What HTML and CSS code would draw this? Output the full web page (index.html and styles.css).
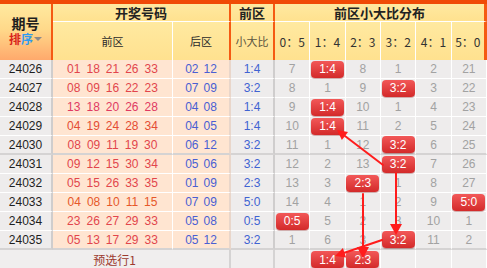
FILE: index.html
```html
<!DOCTYPE html>
<html lang="zh-CN">
<head>
<meta charset="utf-8">
<title>前区小大比分布</title>
<link rel="stylesheet" href="styles.css">
</head>
<body>
<div class="board">
  <div class="grid">
    <div class="cell h-no"><span class="t1">期号</span><span class="t2"><b class="red">排</b><b class="blue">序</b><i class="tri"></i></span></div>
    <div class="cell hd top ob span2">开奖号码</div>
    <div class="cell hd top ob">前区</div>
    <div class="cell hd top orr span6">前区小大比分布</div>

    <div class="cell hd sub wb">前区</div>
    <div class="cell hd sub ob">后区</div>
    <div class="cell hd sub ob ratio-h">小大比</div>
    <div class="cell hd dh wb">0：5</div>
    <div class="cell hd dh wb">1：4</div>
    <div class="cell hd dh wb">2：3</div>
    <div class="cell hd dh wb">3：2</div>
    <div class="cell hd dh wb">4：1</div>
    <div class="cell hd dh orr">5：0</div>

    <div class="row">
      <div class="cell no">24026</div>
      <div class="cell fr c-r"><span>01</span><span>18</span><span>21</span><span>26</span><span>33</span></div>
      <div class="cell bk"><span>02</span><span>12</span></div>
      <div class="cell rt">1:4</div>
      <div class="cell d">7</div><div class="cell d"><span class="b">1:4</span></div><div class="cell d">8</div><div class="cell d">1</div><div class="cell d">2</div><div class="cell d">21</div>
    </div>
    <div class="row">
      <div class="cell no">24027</div>
      <div class="cell fr c-r"><span>08</span><span>09</span><span>16</span><span>22</span><span>23</span></div>
      <div class="cell bk"><span>07</span><span>09</span></div>
      <div class="cell rt">3:2</div>
      <div class="cell d">8</div><div class="cell d">1</div><div class="cell d">9</div><div class="cell d"><span class="b">3:2</span></div><div class="cell d">3</div><div class="cell d">22</div>
    </div>
    <div class="row">
      <div class="cell no">24028</div>
      <div class="cell fr c-p"><span>13</span><span>18</span><span>20</span><span>26</span><span>28</span></div>
      <div class="cell bk"><span>04</span><span>08</span></div>
      <div class="cell rt">1:4</div>
      <div class="cell d">9</div><div class="cell d"><span class="b">1:4</span></div><div class="cell d">10</div><div class="cell d">1</div><div class="cell d">4</div><div class="cell d">23</div>
    </div>
    <div class="row">
      <div class="cell no">24029</div>
      <div class="cell fr c-o"><span>04</span><span>19</span><span>24</span><span>28</span><span>34</span></div>
      <div class="cell bk"><span>04</span><span>05</span></div>
      <div class="cell rt">1:4</div>
      <div class="cell d">10</div><div class="cell d"><span class="b">1:4</span></div><div class="cell d">11</div><div class="cell d">2</div><div class="cell d">5</div><div class="cell d">24</div>
    </div>
    <div class="row end">
      <div class="cell no">24030</div>
      <div class="cell fr c-r"><span>08</span><span>09</span><span>11</span><span>19</span><span>30</span></div>
      <div class="cell bk"><span>06</span><span>12</span></div>
      <div class="cell rt">3:2</div>
      <div class="cell d">11</div><div class="cell d">1</div><div class="cell d">12</div><div class="cell d"><span class="b">3:2</span></div><div class="cell d">6</div><div class="cell d">25</div>
    </div>
    <div class="row">
      <div class="cell no">24031</div>
      <div class="cell fr c-r"><span>09</span><span>12</span><span>15</span><span>30</span><span>34</span></div>
      <div class="cell bk"><span>05</span><span>06</span></div>
      <div class="cell rt">3:2</div>
      <div class="cell d">12</div><div class="cell d">2</div><div class="cell d">13</div><div class="cell d"><span class="b">3:2</span></div><div class="cell d">7</div><div class="cell d">26</div>
    </div>
    <div class="row">
      <div class="cell no">24032</div>
      <div class="cell fr c-r"><span>05</span><span>15</span><span>26</span><span>33</span><span>35</span></div>
      <div class="cell bk"><span>01</span><span>09</span></div>
      <div class="cell rt">2:3</div>
      <div class="cell d">13</div><div class="cell d">3</div><div class="cell d"><span class="b">2:3</span></div><div class="cell d">1</div><div class="cell d">8</div><div class="cell d">27</div>
    </div>
    <div class="row">
      <div class="cell no">24033</div>
      <div class="cell fr c-o2"><span>04</span><span>08</span><span>10</span><span>11</span><span>15</span></div>
      <div class="cell bk"><span>07</span><span>09</span></div>
      <div class="cell rt">5:0</div>
      <div class="cell d">14</div><div class="cell d">4</div><div class="cell d">1</div><div class="cell d">2</div><div class="cell d">9</div><div class="cell d"><span class="b">5:0</span></div>
    </div>
    <div class="row">
      <div class="cell no">24034</div>
      <div class="cell fr c-r"><span>23</span><span>26</span><span>27</span><span>29</span><span>33</span></div>
      <div class="cell bk"><span>05</span><span>08</span></div>
      <div class="cell rt">0:5</div>
      <div class="cell d"><span class="b">0:5</span></div><div class="cell d">5</div><div class="cell d">2</div><div class="cell d">3</div><div class="cell d">10</div><div class="cell d">1</div>
    </div>
    <div class="row end">
      <div class="cell no">24035</div>
      <div class="cell fr c-r"><span>05</span><span>13</span><span>17</span><span>29</span><span>33</span></div>
      <div class="cell bk"><span>05</span><span>12</span></div>
      <div class="cell rt">3:2</div>
      <div class="cell d">1</div><div class="cell d">6</div><div class="cell d">3</div><div class="cell d"><span class="b">3:2</span></div><div class="cell d">11</div><div class="cell d">2</div>
    </div>
    <div class="row foot">
      <div class="cell ft-label">预选行1</div>
      <div class="cell ft"></div>
      <div class="cell ft d"></div><div class="cell ft d"><span class="b">1:4</span></div><div class="cell ft d"><span class="b">2:3</span></div><div class="cell ft d"></div><div class="cell ft d"></div><div class="cell ft d"></div>
    </div>
  </div>

  <svg class="arrows" width="487" height="268" viewBox="0 0 487 268">
    <g stroke="#ff1c1c" stroke-width="2" fill="none" stroke-linecap="round">
      <line x1="383" y1="165" x2="345" y2="136"/>
      <line x1="396" y1="173" x2="396" y2="225"/>
      <line x1="382" y1="240" x2="344.5" y2="252.8"/>
      <line x1="363" y1="194" x2="363" y2="248"/>
    </g>
    <g fill="#ff1c1c">
      <polygon points="337,130 348,132.1 341.9,140"/>
      <polygon points="396,235 390,224 402,224"/>
      <polygon points="335,256 346.1,257.5 342.9,248.1"/>
      <polygon points="363,258 357,247 369,247"/>
    </g>
  </svg>
</div>
</body>
</html>
```

FILE: styles.css
```css
html, body {
  margin: 0;
  padding: 0;
  background: #fff;
  overflow: hidden;
}

body {
  font-family: "Liberation Sans", "Noto Sans CJK SC", sans-serif;
  font-size: 12px;
  color: #222;
}

.board {
  position: relative;
  width: 487px;
}

.grid {
  display: grid;
  grid-template-columns: 53px 120px 58px 44px repeat(6, minmax(0, 1fr));
  grid-template-rows: 18px 38px repeat(11, 19px);
  border-top: 4px solid #f04a06;
  width: 487px;
}

.row {
  display: contents;
}

.cell {
  box-sizing: border-box;
  display: flex;
  align-items: center;
  justify-content: center;
  white-space: nowrap;
  min-width: 0;
}

/* ---------- header ---------- */
.h-no {
  grid-row: span 2;
  flex-direction: column;
  background: linear-gradient(#ffe99f 0%, #ffd98a 45%, #ffa96c 100%);
  border-right: 2px solid #f55a12;
  font-family: "Noto Sans CJK SC", sans-serif;
  padding-bottom: 3px;
}

.h-no .t1 {
  font-size: 14px;
  font-weight: bold;
  line-height: 16px;
  color: #1e1e1e;
}

.h-no .t2 {
  font-size: 12px;
  line-height: 15px;
  display: flex;
  align-items: center;
}

.red { color: #d8251c; }
.blue { color: #2f9bf0; }

.tri {
  display: inline-block;
  width: 0;
  height: 0;
  margin-left: 1px;
  border-left: 4px solid transparent;
  border-right: 4px solid transparent;
  border-top: 4px solid #8a8a8a;
}

.hd {
  background: linear-gradient(#ffe9a0, #ffe18f);
  font-family: "Noto Sans CJK SC", sans-serif;
  color: #222;
}

.top {
  border-bottom: 1px solid #fff;
  font-weight: bold;
  font-size: 13px;
}

.span2 { grid-column: span 2; }
.span6 { grid-column: span 6; }

.ob { border-right: 2px solid #f55a12; }
.wb { border-right: 1px solid #fff; }
.orr { border-right: 3px solid #f55a12; }

.sub {
  font-size: 11px;
  color: #2a2a2a;
}

.ratio-h {
  color: #5b5540;
}

.dh {
  font-size: 12px;
  color: #333;
}

/* ---------- data ---------- */
.no {
  background: #eeecec;
  border-right: 2px solid #cfcdcd;
  border-bottom: 1px solid #fff;
  color: #1f1f1f;
}

.fr {
  background: #ffe5d1;
  border-right: 1px solid #fff;
  border-bottom: 1px solid #fff;
  gap: 6px;
}

.c-r { color: #e2454c; }
.c-p { color: #e03a62; }
.c-o { color: #e44d34; }
.c-o2 { color: #e6582a; }

.bk {
  background: #ffe5d1;
  border-right: 2px solid #e9d6ca;
  border-bottom: 1px solid #fff;
  color: #4a5fd3;
  gap: 5px;
}

.rt {
  background: #eeecec;
  border-right: 2px solid #cfcdcd;
  border-bottom: 1px solid #fff;
  color: #3f63d2;
}

.d {
  background: #eeecec;
  border-right: 1px solid #fff;
  border-bottom: 1px solid #fff;
  color: #a2a2a2;
}

.row.end > .cell {
  border-bottom: 2px solid #d5d3d3;
}

.b {
  box-sizing: border-box;
  width: 33px;
  height: 17px;
  border-radius: 4px;
  background: linear-gradient(#f25858, #d32a2a);
  box-shadow: 0 1px 1px rgba(110, 0, 0, 0.35);
  color: #fff;
  font-size: 12px;
  display: flex;
  align-items: center;
  justify-content: center;
  flex: none;
}

/* ---------- footer ---------- */
.ft-label {
  grid-column: span 3;
  background: #f0eeee;
  border-right: 2px solid #d5d3d3;
  color: #9c3a2e;
  font-family: "Noto Sans CJK SC", sans-serif;
  font-size: 12px;
}

.ft {
  background: #f0eeee;
  border-right: 2px solid #d5d3d3;
}

.ft.d {
  border-right: 1px solid #fff;
  align-items: flex-start;
  padding-top: 1px;
}

/* ---------- overlay ---------- */
.arrows {
  position: absolute;
  left: 0;
  top: 0;
  pointer-events: none;
}
```
